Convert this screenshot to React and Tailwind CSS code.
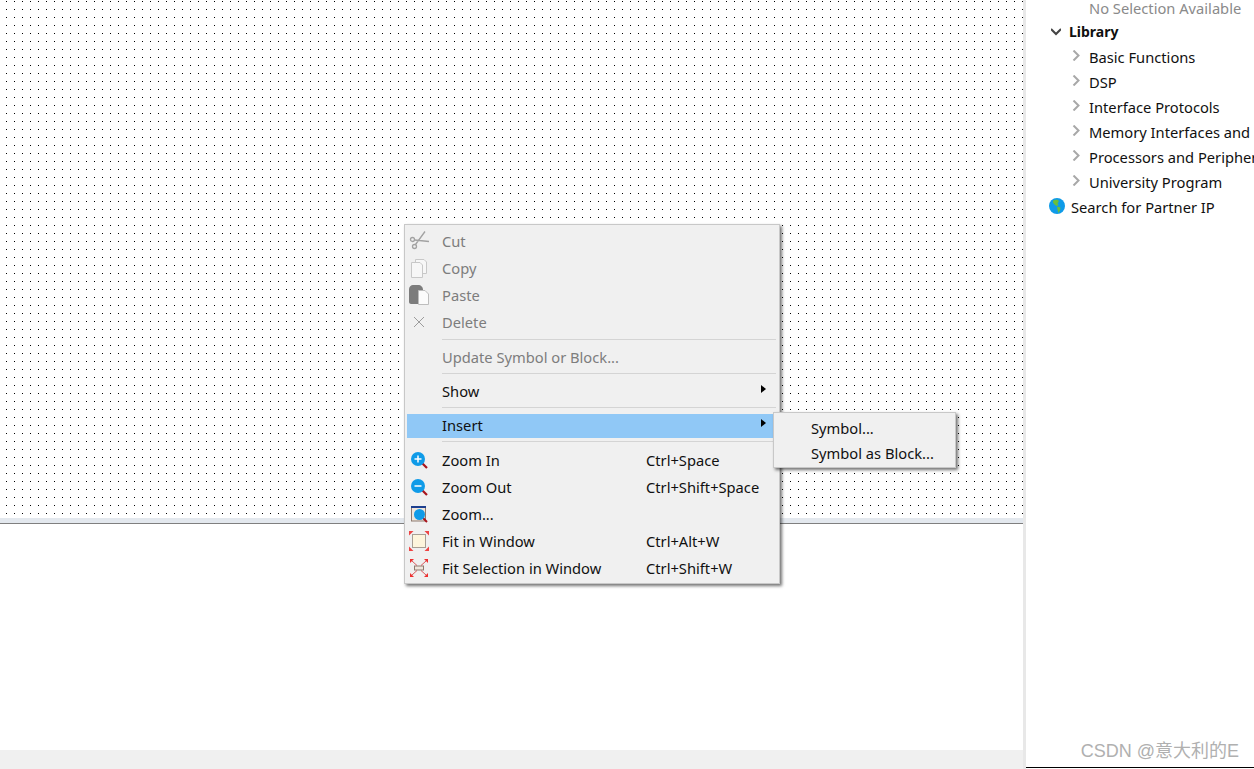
const font = { fontFamily: '"Noto Sans", sans-serif' };

const ScissorsIcon = () => (
  <svg width="20" height="20" viewBox="0 0 20 20" fill="none" stroke="#a2a2a2" strokeWidth="1.300">
    <circle cx="3.500" cy="8.500" r="2" />
    <circle cx="5.500" cy="15.500" r="2" />
    <path d="M5.500 9L20 10.500M6.500 13.500L16 0.500" />
  </svg>
);

const CopyIcon = () => (
  <svg width="16" height="19" viewBox="0 0 16 19" fill="#f7f7f7" stroke="#c8c8c8">
    <path d="M4.500 0.500H13L15.500 3V14.500H4.500Z" />
    <path d="M0.500 3.500H9L11.500 6V18.500H0.500Z" />
  </svg>
);

const PasteIcon = () => (
  <svg width="20" height="20" viewBox="0 0 20 20">
    <path d="M0 4C0 2 2 0 4 0H9C12 0 14 2 14 5V19H2C1 19 0 18 0 17Z" fill="#7c7c7c" />
    <path d="M9.500 5.500H16L19.500 9V19.500H9.500Z" fill="#fbfbfb" stroke="#bdbdbd" />
  </svg>
);

const DeleteIcon = () => (
  <svg width="12" height="12" viewBox="0 0 12 12" fill="none" stroke="#9c9c9c" strokeWidth="1">
    <path d="M1 1L11 11M11 1L1 11" />
  </svg>
);

const ZoomIcon = ({ sign }) => (
  <svg width="17" height="17" viewBox="0 0 17 17" fill="none">
    <path d="M10 10L16 16" stroke="#a8141c" strokeWidth="2.200" />
    <circle cx="7" cy="7" r="7" fill="#0f9be8" />
    <path d={sign === "plus" ? "M3.500 7H10.500M7 3.500V10.500" : "M3.500 7H10.500"} stroke="#fff" strokeWidth="1.500" />
  </svg>
);

const ZoomBoxIcon = () => (
  <svg width="17" height="17" viewBox="0 0 17 17" fill="none">
    <rect x="0.500" y="1" width="14" height="14" fill="#efe6dc" stroke="#8d7a70" />
    <path d="M0 1H15" stroke="#1d3f8f" strokeWidth="2" />
    <path d="M11 11L16 16" stroke="#a8141c" strokeWidth="2" />
    <circle cx="8.500" cy="8.500" r="5.500" fill="#0f9be8" />
  </svg>
);

const FitWindowIcon = () => (
  <svg width="20" height="20" viewBox="0 0 20 20" fill="none">
    <rect x="3.500" y="3.500" width="13" height="13" fill="#fdf5dc" stroke="#a89f94" />
    <path d="M0 0H4.500L0 4.500ZM20 0H15.500L20 4.500ZM0 20H4.500L0 15.500ZM20 20H15.500L20 15.500Z" fill="#ee4444" />
  </svg>
);

const FitSelectionIcon = () => (
  <svg width="18" height="18" viewBox="0 0 18 18" fill="none">
    <rect x="4.500" y="7" width="9" height="4" fill="#efe6dc" stroke="#8d7a70" />
    <path d="M2 2L7 6.500M16 2L11 6.500M2 16L7 11.500M16 16L11 11.500" stroke="#d8484c" strokeWidth="0.900" />
    <path d="M0 0H4L0 4ZM18 0H14L18 4ZM0 18H4L0 14ZM18 18H14L18 14Z" fill="#ee3030" />
  </svg>
);

const GlobeIcon = () => (
  <svg width="16" height="16" viewBox="0 0 16 16" className="shrink-0">
    <circle cx="8" cy="8" r="8" fill="#0f9be8" />
    <path d="M4 2.500L8 1.500L10 3L8.500 5.500L9.500 7L7.500 8L5.500 6.500L4 4.500Z" fill="#6bbf3a" />
    <path d="M8 8.500L11.500 9.500L11 12.500L9.500 15L8.500 12Z" fill="#6bbf3a" />
  </svg>
);

const Chevron = ({ open }) => (
  <svg width="10" height="11" viewBox="0 0 10 11" fill="none" className="shrink-0">
    {open ? (
      <path d="M0 3L5 8L10 3" stroke="#444" strokeWidth="2" />
    ) : (
      <path d="M2.500 0.500L7.500 5.500L2.500 10.500" stroke="#a8a8a8" strokeWidth="2" />
    )}
  </svg>
);

const Arrow = () => (
  <span className="absolute right-[13px] top-1/2 -translate-y-[7px] w-0 h-0 border-y-[4px] border-y-transparent border-l-[5px] border-l-black" />
);

function MenuRow({ icon, label, shortcut, disabled, active, arrow, h = "h-[27px]" }) {
  return (
    <div className={`relative flex items-center ${h} ${active ? "bg-[#90c8f6]" : ""} ${disabled ? "text-[#7d7d7d]" : "text-[#101010]"}`}>
      <span className="w-[24px] mr-[11px] h-full flex items-center justify-center shrink-0">{icon}</span>
      <span className="flex-1">{label}</span>
      {shortcut && <span className="w-[133px]">{shortcut}</span>}
      {arrow && <Arrow />}
    </div>
  );
}

const Separator = ({ h = "h-[10px]" }) => (
  <div className={`${h} pt-[3px] pl-[35px] pr-[3px]`}>
    <div className="h-px bg-[#d4d4d4]" />
  </div>
);

const libraryItems = [
  "Basic Functions",
  "DSP",
  "Interface Protocols",
  "Memory Interfaces and Controllers",
  "Processors and Peripherals",
  "University Program",
];

export default function App() {
  return (
    <div className="relative flex w-[1254px] h-[769px] overflow-hidden bg-white text-[14.7px]" style={font}>
      <div className="flex flex-col w-[1023px] shrink-0">
        <div className="h-[518px] bg-white bg-[radial-gradient(circle_at_6.5px_1.5px,#000_0.8px,transparent_0.8px)] bg-[length:8px_8px]" />
        <div className="h-[5px] bg-[#e3e8ee]" />
        <div className="h-px bg-[#7f7f7f]" />
        <div className="flex-1 bg-white" />
        <div className="h-[19px] bg-[#f0f0f0]" />
      </div>

      <div className="w-[3px] bg-[#e8e8e8] shrink-0" />

      <div className="flex-1 flex flex-col min-w-0 overflow-hidden text-[#101010] whitespace-nowrap">
        <div className="flex-1">
          <div className="h-[20px] -mt-[2px] pl-[63px] flex items-center text-[#8a8a8a]">No Selection Available</div>
          <div className="h-[25px] mt-[1px] mb-px pl-[25px] flex items-center gap-[8px]">
            <Chevron open />
            <span className="font-bold text-[14px]">Library</span>
          </div>
          {libraryItems.map((item) => (
            <div key={item} className="h-[25px] pl-[45px] flex items-center gap-[8px]">
              <span className="-mt-[4px] flex"><Chevron /></span>
              <span>{item}</span>
            </div>
          ))}
          <div className="h-[25px] pl-[23px] flex items-center gap-[6px]">
            <span className="-mt-[3px] flex"><GlobeIcon /></span>
            <span>Search for Partner IP</span>
          </div>
        </div>
        <div className="h-px mb-px bg-black" />
      </div>

      <div className="absolute right-[15px] top-[739px] text-[18px] leading-[24px] text-[#b0b0b0]" style={{ fontFamily: '"Liberation Sans", "Noto Sans CJK SC", sans-serif' }}>
        CSDN @意大利的E
      </div>

      <div className="absolute left-[404px] top-[224px] w-[376px] h-[360px] bg-[#f0f0f0] border border-[#c8c8c8] pt-[2.500px] pl-[2px] shadow-[2px_2px_3px_rgba(0,0,0,0.55)]">
        <MenuRow disabled label="Cut" icon={<ScissorsIcon />} />
        <MenuRow disabled label="Copy" icon={<CopyIcon />} />
        <MenuRow disabled label="Paste" icon={<PasteIcon />} />
        <MenuRow disabled label="Delete" icon={<DeleteIcon />} />
        <Separator />
        <MenuRow disabled label="Update Symbol or Block..." h="h-[24px]" />
        <Separator />
        <MenuRow label="Show" arrow h="h-[24px]" />
        <Separator />
        <MenuRow label="Insert" arrow active h="h-[24px]" />
        <Separator h="h-[9px]" />
        <MenuRow label="Zoom In" shortcut="Ctrl+Space" icon={<ZoomIcon sign="plus" />} />
        <MenuRow label="Zoom Out" shortcut="Ctrl+Shift+Space" icon={<ZoomIcon sign="minus" />} />
        <MenuRow label="Zoom..." icon={<ZoomBoxIcon />} />
        <MenuRow label="Fit in Window" shortcut="Ctrl+Alt+W" icon={<FitWindowIcon />} />
        <MenuRow label="Fit Selection in Window" shortcut="Ctrl+Shift+W" icon={<FitSelectionIcon />} />
      </div>

      <div className="absolute left-[773px] top-[412px] w-[183px] h-[56px] bg-[#f0f0f0] border border-[#c8c8c8] pt-[2.500px] pl-[37px] text-[#101010] shadow-[2px_2px_3px_rgba(0,0,0,0.55)]">
        <div className="h-[25px] flex items-center">Symbol...</div>
        <div className="h-[25px] flex items-center">Symbol as Block...</div>
      </div>
    </div>
  );
}
